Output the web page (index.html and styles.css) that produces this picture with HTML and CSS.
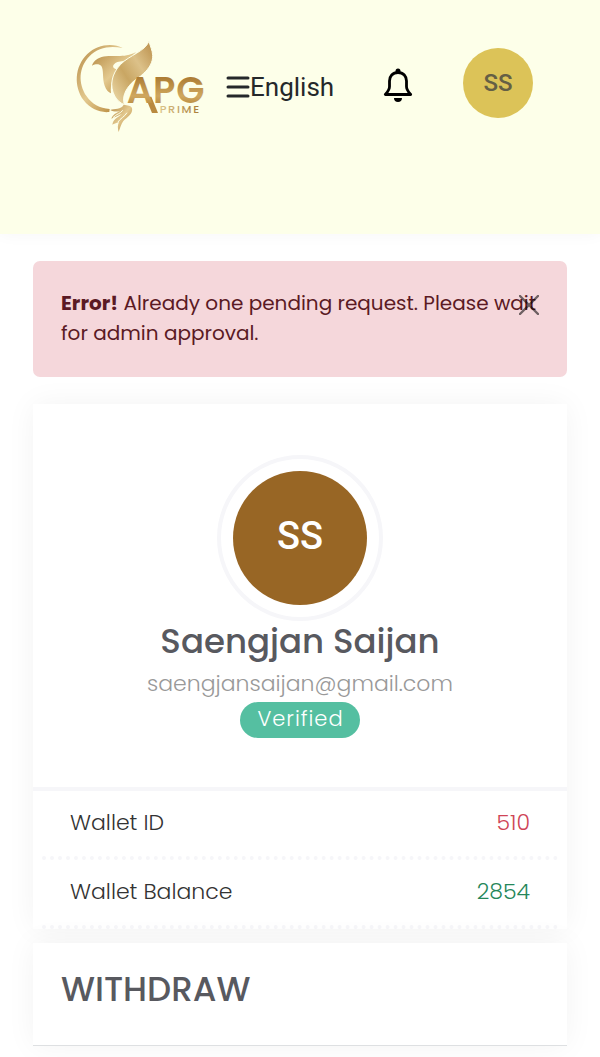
FILE: index.html
```html
<!DOCTYPE html>
<html lang="en">
<head>
  <meta charset="UTF-8">
  <meta name="viewport" content="width=device-width, initial-scale=1.0">
  <title>APG Prime - Withdraw</title>
  <link rel="stylesheet" href="styles.css">
</head>
<body>
  <header class="topbar">
    <a href="#" class="logo" aria-label="APG Prime">
      <svg viewBox="36 24 408 294" aria-hidden="true">
        <defs>
          <linearGradient id="gold" x1="0" y1="0" x2="1" y2="1">
            <stop offset="0" stop-color="#b58a45"/>
            <stop offset="0.5" stop-color="#e3c98f"/>
            <stop offset="1" stop-color="#b07d2c"/>
          </linearGradient>
          <linearGradient id="wing" x1="1" y1="0" x2="0" y2="1">
            <stop offset="0" stop-color="#b98d48"/>
            <stop offset="0.35" stop-color="#dcc189"/>
            <stop offset="0.6" stop-color="#c9a663"/>
            <stop offset="1" stop-color="#f0dfb0"/>
          </linearGradient>
          <linearGradient id="letters" x1="0" y1="0" x2="0" y2="1">
            <stop offset="0.2" stop-color="#a97830"/>
            <stop offset="0.6" stop-color="#cfa75e"/>
            <stop offset="1" stop-color="#a06a1c"/>
          </linearGradient>
          <linearGradient id="prime" x1="0" y1="0" x2="1" y2="0">
            <stop offset="0" stop-color="#dcc489"/>
            <stop offset="1" stop-color="#a87a35"/>
          </linearGradient>
        </defs>
        <path fill="url(#gold)" d="M188 54C160 38 112 42 82 72C43 110 41 170 71 211C90 236 119 249 148 246L149 237C119 235 95 222 80 199C53 159 57 112 87 80C114 51 151 47 188 54Z"/>
        <path fill="url(#gold)" d="M228 66C192 87 153 72 125 81C109 86 99 96 96 107C108 101 118 102 124 108C132 120 126 145 134 167C138 179 145 187 153 190C150 160 160 134 177 117C156 120 153 104 172 96C197 94 214 83 228 66Z"/>
        <path fill="url(#wing)" stroke="#fdffe9" stroke-width="3" d="M267 34C254 65 209 75 182 103C154 132 148 168 164 198C171 211 182 220 193 224C186 200 196 180 214 160C225 148 240 142 251 130C268 115 279 96 278 76C277 60 271 50 267 34Z"/>
        <path fill="url(#gold)" d="M151 240C164 234 183 240 191 224C202 226 213 226 216 234C220 251 201 262 190 273C184 281 180 294 176 306C173 294 172 286 177 276C168 280 162 281 157 284C160 267 173 263 186 252C174 257 164 262 154 266C158 253 169 250 180 243C169 246 160 245 151 240Z"/>
        <path fill="none" stroke="#fdffe9" stroke-width="3" d="M174 276C180 266 194 260 201 248M159 263C170 251 181 252 188 241"/>
        <path fill="#b98a3f" d="M256 200L274 200L294 249L276 249Z"/>
        <text class="logo-apg" y="220" fill="url(#letters)"><tspan x="200">A</tspan><tspan x="279">P</tspan><tspan x="349">G</tspan></text>
        <text class="logo-prime" x="299" y="249" fill="url(#prime)">PRIME</text>
      </svg>
    </a>
    <button class="menu-btn" type="button" aria-label="Menu">
      <svg viewBox="0 0 24 24" aria-hidden="true">
        <path d="M2 3H22M2 12H22M2 21H22" fill="none" stroke="currentColor" stroke-width="3" stroke-linecap="round"/>
      </svg>
    </button>
    <button class="lang-btn" type="button">English</button>
    <div class="topbar-right">
      <button class="bell-btn" type="button" aria-label="Notifications">
        <svg viewBox="0 0 30 34" aria-hidden="true">
          <circle cx="15" cy="3" r="2.500"/>
          <path d="M15 4.500C9.500 4.500 6.500 8.500 6.500 13V18.500C6.500 22 4 24.500 2.300 26.500H27.700C26 24.500 23.500 22 23.500 18.500V13C23.500 8.500 20.500 4.500 15 4.500Z" fill="none" stroke="currentColor" stroke-width="2.800" stroke-linejoin="round"/>
          <path d="M11 30H19C19 32.500 17.500 34 15 34C12.500 34 11 32.500 11 30Z"/>
        </svg>
      </button>
      <a href="#" class="user-badge">SS</a>
    </div>
  </header>

  <main>
    <div class="alert" role="alert">
      <strong>Error!</strong> Already one pending request. Please wait for admin approval.
      <button class="alert-close" type="button" aria-label="Close">
        <svg viewBox="0 0 20 20" aria-hidden="true">
          <path d="M1 1L19 19M19 1L1 19" fill="none" stroke="currentColor" stroke-width="2.400" stroke-linecap="round"/>
        </svg>
      </button>
    </div>

    <section class="card">
      <div class="profile">
        <div class="avatar-ring">
          <div class="avatar">SS</div>
        </div>
        <h1>Saengjan Saijan</h1>
        <p class="email">saengjansaijan@gmail.com</p>
        <span class="status">Verified</span>
      </div>
      <dl class="wallet">
        <div class="wallet-row">
          <dt>Wallet ID</dt>
          <dd class="red">510</dd>
        </div>
        <div class="wallet-row">
          <dt>Wallet Balance</dt>
          <dd class="green">2854</dd>
        </div>
      </dl>
    </section>

    <section class="card">
      <h2>WITHDRAW</h2>
    </section>
  </main>
</body>
</html>
```
FILE: styles.css
```css
:root {
  --cream: #fdffe9;
  --text: #58595f;
  --line: #f6f6f9;
}

* {
  box-sizing: border-box;
  margin: 0;
  padding: 0;
}

body {
  background-color: #fff;
  color: #333;
  font-family: Poppins, Inter, sans-serif;
  font-size: 20px;
  line-height: 30px;
  overflow-x: hidden;
}

button {
  background: none;
  border: none;
  font: inherit;
  color: inherit;
  cursor: pointer;
}

a {
  color: inherit;
  text-decoration: none;
}

svg {
  display: block;
  width: 100%;
}

/* top bar */
.topbar {
  display: flex;
  align-items: center;
  background-color: var(--cream);
  padding: 38px 67px 98px 72px;
  box-shadow: 0 0 16px rgba(0, 0, 0, 0.04);
}

.logo {
  width: 136px;
  margin-right: 18px;
}

.logo-apg {
  font-family: Poppins, Lato, sans-serif;
  font-weight: 600;
  font-size: 110px;
}

.logo-prime {
  font-family: Poppins, Lato, sans-serif;
  font-weight: 500;
  font-size: 34px;
  letter-spacing: 5px;
}

.menu-btn {
  width: 24px;
  color: #25282a;
}

.lang-btn {
  font-family: Roboto, sans-serif;
  font-size: 26px;
  color: #25282a;
}

.topbar-right {
  display: flex;
  align-items: center;
  gap: 50px;
  margin-left: auto;
}

.bell-btn {
  width: 30px;
  margin-bottom: 4px;
  color: #000;
}

.user-badge {
  width: 70px;
  height: 70px;
  margin-bottom: 8px;
  border-radius: 50%;
  background-color: #dcc358;
  color: #655f45;
  font-family: Roboto, sans-serif;
  font-weight: 500;
  font-size: 24px;
  line-height: 70px;
  text-align: center;
}

main {
  padding: 27px 33px 0;
}

/* alert */
.alert {
  position: relative;
  padding: 27px 24px 29px 28px;
  margin-bottom: 27px;
  border-radius: 7px;
  background-color: #f5d7db;
  color: #5b1a24;
}

.alert-close {
  position: absolute;
  top: 34px;
  right: 28px;
  width: 20px;
  color: #000;
  opacity: 0.55;
}

/* cards */
.card {
  margin-bottom: 14px;
  background-color: #fff;
  box-shadow: 0 0 28px rgba(0, 0, 0, 0.05);
}

.profile {
  display: flex;
  flex-direction: column;
  align-items: center;
  padding: 51px 20px 49px;
  border-bottom: 4px solid var(--line);
}

.avatar-ring {
  padding: 12px;
  border: 4px solid var(--line);
  border-radius: 50%;
}

.avatar {
  width: 134px;
  height: 134px;
  border-radius: 50%;
  background-color: #986625;
  color: #fff;
  font-family: Roboto, sans-serif;
  font-weight: 500;
  font-size: 38px;
  line-height: 130px;
  text-align: center;
}

h1,
h2 {
  color: var(--text);
  font-weight: 500;
  font-size: 34px;
  line-height: 40px;
}

.email {
  margin: 8px 0 3px;
  color: #999;
  font-weight: 300;
  font-size: 22px;
}

.status {
  padding: 0 16px 2px 17px;
  border-radius: 18px;
  background-color: #55bfa1;
  color: #fff;
  font-weight: 300;
  font-size: 21px;
  line-height: 34px;
  letter-spacing: 1px;
}

.wallet {
  padding: 0 9px;
}

.wallet-row {
  display: flex;
  justify-content: space-between;
  align-items: center;
  height: 69px;
  padding: 0 28px 2px;
  border-bottom: 4px dotted var(--line);
  font-weight: 300;
  font-size: 22px;
}

.red {
  color: #cf4456;
}

.green {
  color: #25875a;
}

h2 {
  padding: 26px 28px 36px;
  margin-bottom: 12px;
  border-bottom: 1px solid #dee0e2;
}
```
